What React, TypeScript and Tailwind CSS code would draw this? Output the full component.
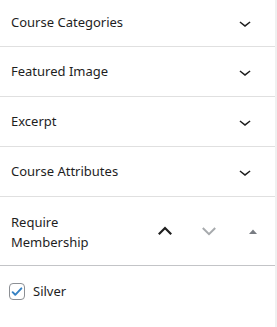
import React from "react";

const ChevronDown = ({ className = "" }: { className?: string }) => (
  <svg viewBox="0 0 24 24" width="24" height="24" className={className} fill="currentColor">
    <path d="M17.5 11.6L12 16l-5.5-4.4.9-1.2L12 14l4.6-3.6 1 1.2z" />
  </svg>
);

const panels = ["Course Categories", "Featured Image", "Excerpt", "Course Attributes"];

export default function App() {
  return (
    <div
      className="w-[277px] h-[327px] bg-white flex text-[#1e1e1e] text-[13px]"
      style={{ fontFamily: '"Noto Sans", "Open Sans", sans-serif' }}
    >
      <div className="flex-1 flex flex-col">
        {panels.map((title, i) => (
          <div
            key={title}
            className={`flex items-center justify-between pl-[11px] pr-[18px] border-b border-[#e0e0e0] ${
              i === 0 ? "h-[47px]" : "h-[50px]"
            }`}
          >
            <span>{title}</span>
            <ChevronDown />
          </div>
        ))}

        <div className="flex items-center h-[69px] border-b border-[#c3c4c7]">
          <h2 className="flex-1 pl-[11px] pr-[20px] leading-[20px] font-normal pt-[1px]">Require Membership</h2>
          <button className="w-[44px] h-[36px] flex items-center justify-center text-[#1e1e1e]">
            <svg viewBox="0 0 20 20" width="20" height="20">
              <polyline points="3.8,13.2 10,7 16.2,13.2" fill="none" stroke="currentColor" strokeWidth="2.2" />
            </svg>
          </button>
          <button className="w-[44px] h-[36px] flex items-center justify-center text-[#a7aaad]">
            <svg viewBox="0 0 20 20" width="20" height="20">
              <polyline points="3.8,7 10,13.2 16.2,7" fill="none" stroke="currentColor" strokeWidth="2" />
            </svg>
          </button>
          <button className="w-[44px] h-[36px] flex items-center justify-center text-[#787c82]">
            <svg viewBox="0 0 8 5" width="8" height="5">
              <polygon points="0,5 4,0.5 8,5" fill="currentColor" />
            </svg>
          </button>
        </div>

        <div className="flex-1 pl-[9px] pt-[16px]">
          <label className="flex items-center gap-[8px]">
            <span className="w-[16px] h-[17px] rounded-[4px] border border-[#8c8f94] flex items-center justify-center">
              <svg viewBox="0 0 16 16" width="14" height="14">
                <path d="M3 8.2l3 3 7-7.4" fill="none" stroke="#3582c4" strokeWidth="2.2" strokeLinecap="round" strokeLinejoin="round" />
              </svg>
            </span>
            <span>Silver</span>
          </label>
        </div>
      </div>
      <div className="w-[2px] bg-[#f0f0f0]" />
    </div>
  );
}
